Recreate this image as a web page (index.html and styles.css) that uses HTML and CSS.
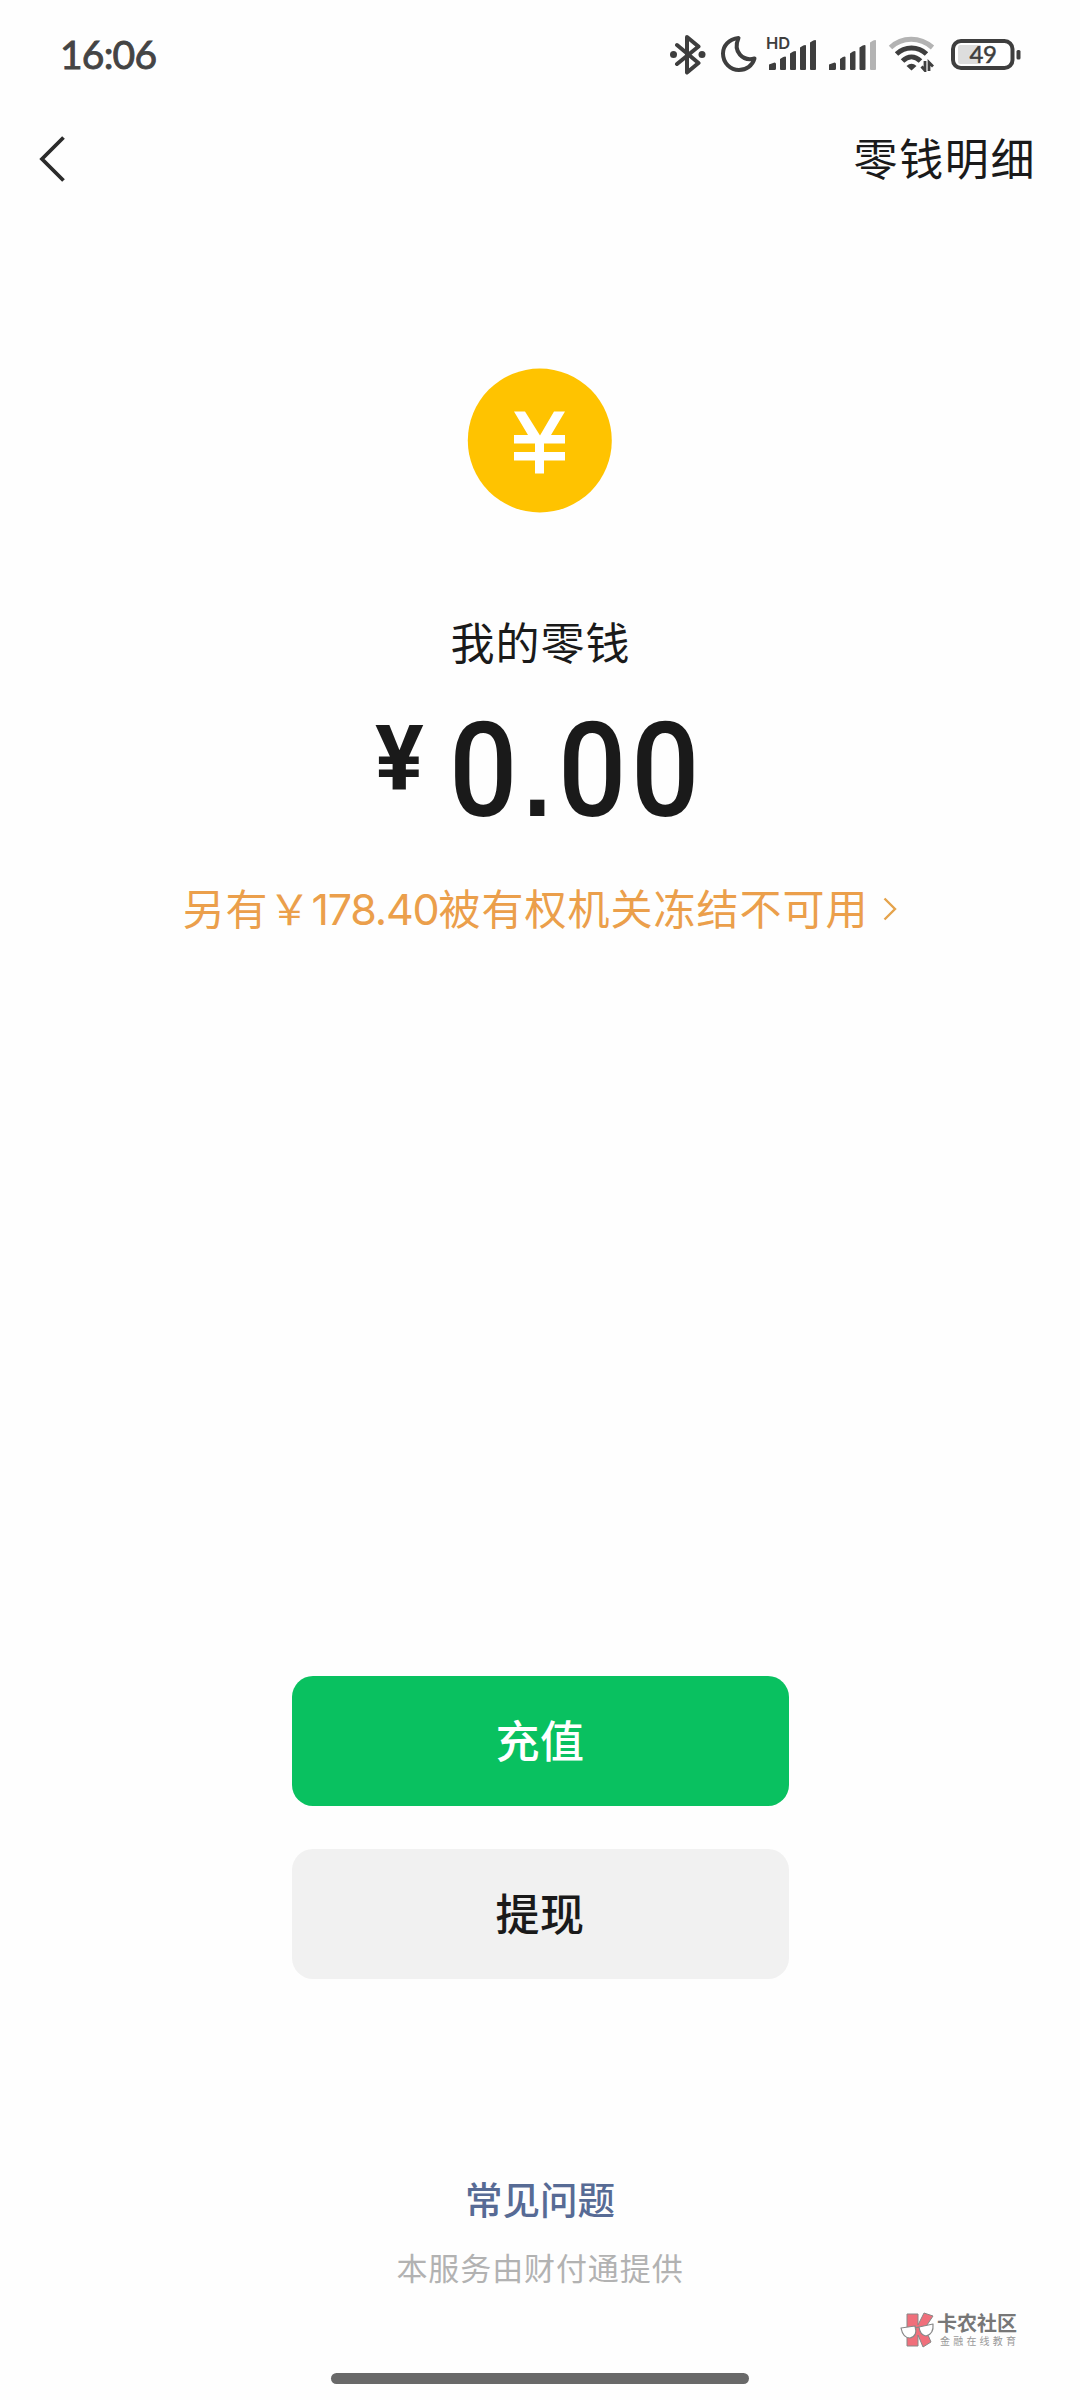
FILE: index.html
```html
<!DOCTYPE html>
<html lang="zh-CN">
<head>
<meta charset="utf-8">
<title>我的零钱</title>
<link rel="stylesheet" href="styles.css">
</head>
<body>
<div class="screen">
  <header class="status">
    <span class="clock">16:06</span>
    <div class="indicators">
      <svg class="bluetooth" width="36" height="42" viewBox="0 0 36 42" fill="none" stroke="#3e3e3e" stroke-width="4" stroke-linejoin="round" stroke-linecap="round"><path d="M7 12 28.500 30 17 39.500V4L28.500 13.500 7 31"/><circle cx="3.500" cy="21.500" r="3.500" fill="#3e3e3e" stroke="none"/><circle cx="32" cy="21.500" r="3.500" fill="#3e3e3e" stroke="none"/></svg>
      <svg class="moon" width="36" height="38" viewBox="0 0 36 38" fill="none" stroke="#3e3e3e" stroke-width="4" stroke-linejoin="round"><path d="M17.500 3C7.500 4 2 11 2 18.500C2 28 9.500 35 18 35C25.500 35 31.500 30.500 33.500 23.500C22 26.500 11.500 17 17.500 3Z"/></svg>
      <div class="hd-signal">
        <svg width="50" height="36" viewBox="0 0 50 36" fill="#3e3e3e"><path d="M2 35V29.500L7.500 27.500Q9 27.500 9 29V33.500Q9 35 7.500 35H3.500ZM13 24Q18.500 20.500 19 22V34Q19 35 18 35H14Q13 35 13 34ZM23 18.500Q28.500 15 29 16.500V34Q29 35 28 35H24Q23 35 23 34ZM33 12.500Q38.500 9 39 10.500V34Q39 35 38 35H34Q33 35 33 34ZM43 7.500Q48.500 4 49 5.500V34Q49 35 48 35H44Q43 35 43 34Z"/></svg>
        <span class="hd">HD</span>
      </div>
      <svg class="signal" width="50" height="36" viewBox="0 0 50 36" fill="#3e3e3e"><path d="M1 35V29.500L6.500 27.500Q8 27.500 8 29V33.500Q8 35 6.500 35H2.500ZM12 24Q17 20.500 17.500 22V34Q17.500 35 16.500 35H13Q12 35 12 34ZM22 18.500Q27 15 27.500 16.500V34Q27.500 35 26.500 35H23Q22 35 22 34ZM31.500 12.500Q37 9 37.500 10.500V34Q37.500 35 36.500 35H32.500Q31.500 35 31.500 34Z"/><path fill="#b3b3b3" d="M42 7.500Q47.500 4 48 5.500V34Q48 35 47 35H43Q42 35 42 34Z"/></svg>
      <svg class="wifi" width="48" height="36" viewBox="0 0 48 36" fill="none" stroke="#3e3e3e" stroke-width="5"><path stroke="#b3b3b3" d="M2.500 11.500C14 .5 32 .5 44.500 11.500"/><path d="M8.500 18C17 10 30 10 38.500 18"/><path d="M14.500 25C20 19.500 27 19.500 32.500 25"/><path fill="#3e3e3e" stroke="none" d="M23.500 34.500 18.500 30Q23.500 25.500 28.500 30Z"/><path stroke-width="2.800" d="M37 25V34.500L33.500 30.500M41 35V26.500L45 30.500"/></svg>
      <svg class="battery" width="70" height="32" viewBox="0 0 70 32"><rect x="2" y="2" width="59.500" height="27" rx="8" fill="#fff" stroke="#3e3e3e" stroke-width="4"/><path d="M9 6H27V25H9Q7 25 7 23V8Q7 6 9 6Z" fill="#ddd"/><rect x="65.500" y="11" width="4" height="9.500" rx="1.500" fill="#3e3e3e"/><text class="level" x="32" y="24" text-anchor="middle">49</text></svg>
    </div>
  </header>
  <nav class="nav">
    <svg width="28" height="46" viewBox="0 0 28 46" fill="none" stroke="#2b2b2b" stroke-width="3.800"><path d="M24.500 1.500 3 23 24.500 44.500"/></svg>
    <a class="detail">零钱明细</a>
  </nav>
  <main class="main">
    <svg class="coin" width="146" height="146" viewBox="0 0 146 146"><circle cx="72.800" cy="72.500" r="72" fill="#ffc300"/><path fill="#fff" d="M47 43.500H58L73 67.500 87 43.500H98L84 67H98V75.500H77V84H98V92.500H77V105.500H68V92.500H47V84H68V75.500H47V67H61Z"/></svg>
    <h1 class="label">我的零钱</h1>
    <div class="amount"><span class="yen">¥</span><span class="value">0<span class="point">.</span>00</span></div>
    <a class="notice"><span class="words">另有￥</span><span class="digits">178.40</span><span class="words">被有权机关冻结不可用</span><svg width="14" height="24" viewBox="0 0 14 24" fill="none" stroke="#e5a34c" stroke-width="2.400"><path d="M1.500 1.500 12 12 1.500 22.500"/></svg></a>
    <div class="actions">
      <button class="btn primary">充值</button>
      <button class="btn">提现</button>
    </div>
    <a class="faq">常见问题</a>
    <p class="provider">本服务由财付通提供</p>
  </main>
  <div class="home-bar"></div>
  <div class="watermark">
    <svg width="36" height="38" viewBox="0 0 36 38" stroke-linejoin="round"><path fill="#f06f7b" stroke="#888" stroke-width="1" d="M7 3H18V14L24 2 33 5 25 17 31 31 23 36 18 24V35H7Z"/><path fill="#fff" stroke="#888" stroke-width="1.200" d="M1 17 15 15Q18 25 10 27Q3 27 1 17ZM19 16 33 13Q34 23 26 25Q20 24 19 16ZM15 17 19 16"/></svg>
    <div class="wm-text"><span class="wm-name">卡农社区</span><span class="wm-sub">金融在线教育</span></div>
  </div>
</div>
</body>
</html>
```
FILE: styles.css
```css
* { box-sizing: border-box; }
body { margin: 0; background: #fefefe; }
.screen {
  position: relative;
  display: flex;
  flex-direction: column;
  width: 1080px;
  height: 2400px;
  overflow: hidden;
  background: #fefefe;
  color: #1a1a1a;
  font-family: "Noto Sans CJK SC", sans-serif;
}
.status {
  display: flex;
  justify-content: space-between;
  height: 108px;
  padding: 0 59px 0 60px;
}
.clock {
  font: 400 39px/108px Lato, sans-serif;
  letter-spacing: -0.8px;
  color: #444;
  -webkit-text-stroke: 0.9px #444;
}
.indicators { display: flex; align-items: flex-start; padding-top: 34px; }
.bluetooth { margin: -1px 15px 0 0; }
.moon { margin: 1px 10px 0 0; }
.signal { margin: 1px 10px 0 11px; }
.wifi { margin: 2px 15px 0 0; }
.battery { margin-top: 5px; }
.level {
  font: 400 24px Lato, sans-serif;
  letter-spacing: -0.5px;
  fill: #3e3e3e;
  stroke: #3e3e3e;
  stroke-width: 0.5px;
}
.hd-signal { position: relative; height: 36px; margin-top: 1px; }
.hd {
  position: absolute;
  left: -1px;
  top: -1px;
  font: 600 16.500px/18px Inter, sans-serif;
  color: #3e3e3e;
}
.nav {
  display: flex;
  align-items: center;
  justify-content: space-between;
  height: 102px;
  padding: 0 44px 0 39px;
}
.detail { padding-bottom: 4px; font-size: 44px; line-height: 60px; letter-spacing: 1.6px; }
.main { display: flex; flex-direction: column; align-items: center; }
.coin { margin-top: 158px; }
.label {
  margin: 97px 0 0;
  padding-left: 1px;
  font-size: 44px;
  font-weight: 400;
  line-height: 60px;
  letter-spacing: 1px;
}
.amount {
  display: flex;
  width: 330px;
  height: 110px;
  margin-top: 45px;
  font-family: Roboto, sans-serif;
}
.yen {
  flex: none;
  width: 74px;
  font-size: 91px;
  font-weight: 700;
  line-height: 86px;
}
.value {
  flex: none;
  font-size: 131px;
  font-weight: 500;
  line-height: 110px;
  transform: scaleX(0.92);
  transform-origin: left;
  letter-spacing: 5px;
}
.point {
  display: inline-block;
  width: 39px;
  font: 700 110px/110px "Liberation Sans", sans-serif;
  letter-spacing: 0;
  text-align: center;
  text-indent: -6px;
}
.notice {
  display: flex;
  align-items: center;
  height: 60px;
  margin-top: 53px;
  font-size: 42px;
  line-height: 60px;
  letter-spacing: 1px;
  color: #eb9f4b;
}
.words { padding-bottom: 4px; }
.digits { font-family: Inter, sans-serif; font-size: 43px; letter-spacing: -1.2px; }
.notice svg { margin-left: 15px; }
.actions { display: flex; flex-direction: column; gap: 43px; margin-top: 737px; }
.btn {
  width: 497px;
  height: 130px;
  padding: 0 0 4px;
  border: 0;
  border-radius: 21px;
  background: #f1f1f1;
  color: #1a1a1a;
  font: 500 44px/126px "Noto Sans CJK SC", sans-serif;
  letter-spacing: 0.6px;
}
.primary { background: #09c160; color: #fff; }
.faq {
  margin-top: 189px;
  font-size: 37.500px;
  font-weight: 500;
  line-height: 60px;
  color: #576b95;
}
.provider {
  margin: 18px 0 0;
  font-size: 31px;
  font-weight: 400;
  line-height: 42px;
  letter-spacing: 0.9px;
  color: #b2b2b2;
}
.home-bar {
  width: 418px;
  height: 11px;
  margin: auto auto 16px;
  border-radius: 6px;
  background: #696969;
}
.watermark {
  position: absolute;
  left: 900px;
  top: 2311px;
  display: flex;
  gap: 1px;
}
.wm-text { display: flex; flex-direction: column; white-space: nowrap; }
.wm-name { font-size: 20px; font-weight: 700; line-height: 24px; color: #777; }
.wm-sub { padding-left: 3px; font-size: 10px; line-height: 12px; letter-spacing: 3.2px; color: #999; }
```
